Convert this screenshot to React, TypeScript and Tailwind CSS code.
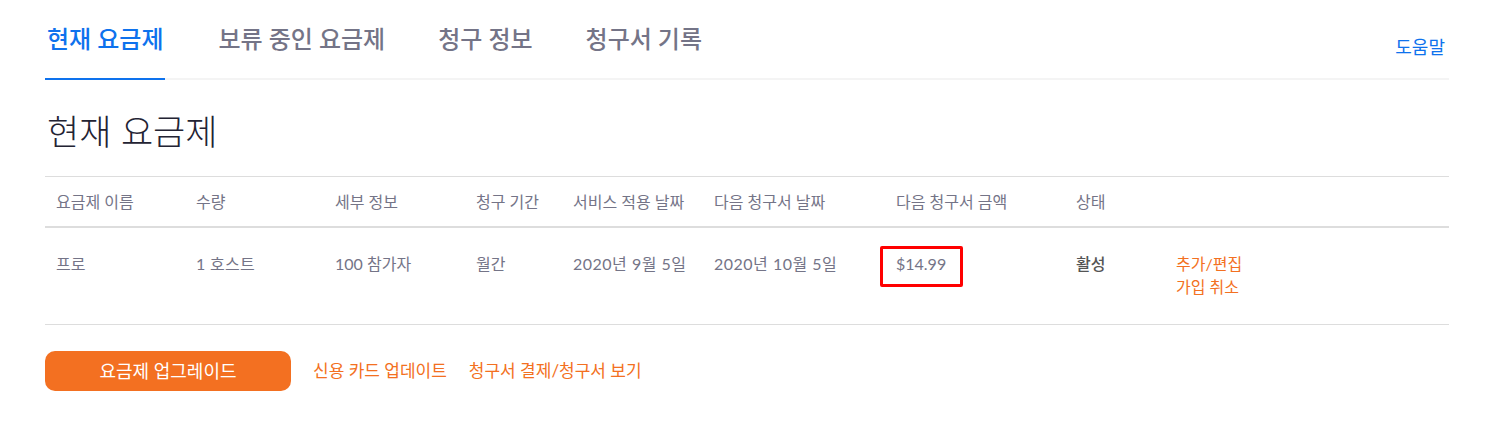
const font = "font-['Lato','Noto_Sans_CJK_KR',sans-serif]";

const tabs = ['현재 요금제', '보류 중인 요금제', '청구 정보', '청구서 기록'];

const columns = [
  { label: '요금제 이름', w: 'w-[140px]' },
  { label: '수량', w: 'w-[139px]' },
  { label: '세부 정보', w: 'w-[141px]' },
  { label: '청구 기간', w: 'w-[97px]' },
  { label: '서비스 적용 날짜', w: 'w-[141px]' },
  { label: '다음 청구서 날짜', w: 'w-[182px]' },
  { label: '다음 청구서 금액', w: 'w-[180px]' },
  { label: '상태', w: 'w-[100px]' },
  { label: '', w: 'flex-1' },
];

export default function App() {
  return (
    <div className={`${font} bg-white w-[1489px] h-[421px] px-[45px] text-[#666]`}>
      {/* Tabs */}
      <div className="flex items-end justify-between border-b-2 border-[#f4f4f4] w-[1404px]">
        <div className="flex gap-[53px]">
          {tabs.map((t, i) => (
            <div
              key={t}
              className={`h-[80px] pt-[21px] text-[24px] font-medium leading-[36px] -mb-[2px] border-b-2 ${
                i === 0 ? 'text-[#0e72ed] border-[#0e72ed] px-[2px]' : 'text-[#747487] border-transparent'
              }`}
            >
              {t}
            </div>
          ))}
        </div>
        <a className="text-[18px] text-[#0e72ed] mb-[17px] mr-[4px]">도움말</a>
      </div>

      {/* Heading */}
      <h1 className="mt-[28px] pl-[2px] text-[35px] font-light leading-[46px] text-[#232333]">현재 요금제</h1>

      {/* Table */}
      <div className="mt-[22px] w-[1404px] border-t border-[#dddddd] text-[16px]">
        <div className="flex h-[51px] items-center border-b-2 border-[#dddddd] text-[#747487]">
          {columns.map((c, i) => (
            <div key={i} className={`${c.w} pl-[11px]`}>
              {c.label}
            </div>
          ))}
        </div>
        <div className="flex h-[97px] pt-[24px] border-b border-[#dddddd] text-[#747487] leading-[23px]">
          <div className="w-[140px] pl-[11px]">프로</div>
          <div className="w-[139px] pl-[11px] tracking-[0.3px]">1 호스트</div>
          <div className="w-[141px] pl-[11px]">100 참가자</div>
          <div className="w-[97px] pl-[11px]">월간</div>
          <div className="w-[141px] pl-[11px] tracking-[0.5px]">2020년 9월 5일</div>
          <div className="w-[182px] pl-[11px] tracking-[0.5px]">2020년 10월 5일</div>
          <div className="w-[180px] pl-[11px]">
            <span className="relative">
              $14.99
              <span className="absolute left-[-16px] top-[-8px] w-[83px] h-[41px] border-[3px] border-[#ff0000] rounded-[2px]" />
            </span>
          </div>
          <div className="w-[100px] pl-[11px] font-medium text-[#555]">활성</div>
          <div className="flex-1 pl-[11px] flex flex-col text-[#f37021]">
            <a>추가/편집</a>
            <a>가입 취소</a>
          </div>
        </div>
      </div>

      {/* Actions */}
      <div className="flex items-center mt-[26px] gap-[22px]">
        <button className="w-[246px] h-[40px] rounded-[10px] bg-[#f37021] text-white text-[18px]">
          요금제 업그레이드
        </button>
        <a className="text-[17px] text-[#f37021]">신용 카드 업데이트</a>
        <a className="text-[17px] text-[#f37021]">청구서 결제/청구서 보기</a>
      </div>
    </div>
  );
}
